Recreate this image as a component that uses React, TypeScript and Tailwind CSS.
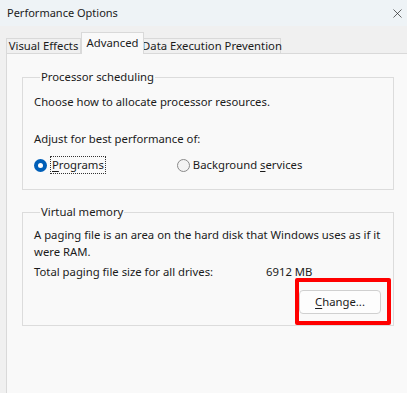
import { X } from 'lucide-react';

const font = { fontFamily: '"Noto Sans", "Liberation Sans", sans-serif' };

function Radio({ checked }: { checked?: boolean }) {
  return checked ? (
    <span className="flex h-[13px] w-[13px] shrink-0 items-center justify-center rounded-full bg-[#005fb8]">
      <span className="h-[5px] w-[5px] rounded-full bg-white" />
    </span>
  ) : (
    <span className="block h-[13px] w-[13px] shrink-0 rounded-full border border-[#8a8a8a] bg-[#f4f4f4]" />
  );
}

export default function App() {
  return (
    <div
      className="flex h-[393px] w-[407px] flex-col overflow-hidden whitespace-nowrap bg-[#f0f0f0] text-[11.3px] leading-[16px] text-[#1b1b1b]"
      style={font}
    >
      {/* Title bar */}
      <div className="flex h-[26px] shrink-0 items-center justify-between bg-[#eef3f6] pl-[7px] pr-[2px]">
        <span className="text-[11px]">Performance Options</span>
        <X size={15} strokeWidth={1.1} className="text-[#222]" />
      </div>

      {/* Tabs */}
      <div className="flex h-[27px] shrink-0 items-end pl-[6px]">
        <div className="flex h-[15px] w-[75px] items-center justify-center border border-b-0 border-[#d9d9d9] bg-[#f0f0f0]">
          Visual Effects
        </div>
        <div className="relative z-10 -mb-px flex h-[22px] w-[63px] items-center justify-center border border-b-0 border-[#d9d9d9] bg-[#f9f9f9] pb-[2px]">
          Advanced
        </div>
        <div className="flex h-[15px] w-[137px] items-center justify-center border border-b-0 border-l-0 border-[#d9d9d9] bg-[#f0f0f0]">
          Data Execution Prevention
        </div>
      </div>

      {/* Panel */}
      <div className="ml-[6px] flex-1 border-l border-t border-[#d9d9d9] bg-[#f9f9f9] pl-[15px] pt-[15px]">
        <fieldset className="w-[372px] border border-[#dcdcdc] pb-[15px] pl-[11px]">
          <legend className="ml-[6px] px-[1px]">Processor scheduling</legend>
          <p className="pt-[9px]">Choose how to allocate processor resources.</p>
          <p className="pt-[21px]">Adjust for best performance of:</p>
          <div className="flex items-center pt-[9px]">
            <Radio checked />
            <span className="ml-[3px] border border-dotted border-[#333] px-[1px]">
              <span className="underline underline-offset-2">P</span>rograms
            </span>
            <span className="ml-[71px]">
              <Radio />
            </span>
            <span className="ml-[3px]">
              Background <span className="underline underline-offset-2">s</span>ervices
            </span>
          </div>
        </fieldset>

        <fieldset className="mt-[14px] w-[372px] border border-[#dcdcdc] pb-[11px] pl-[11px] pr-[12px]">
          <legend className="ml-[6px] px-[1px]">Virtual memory</legend>
          <p className="whitespace-normal pt-[6px] leading-[17px]">
            A paging file is an area on the hard disk that Windows uses as if it were RAM.
          </p>
          <div className="flex pt-[4px]">
            <span className="w-[232px]">Total paging file size for all drives:</span>
            <span>6912 MB</span>
          </div>
          <div className="flex justify-end pt-[10px]">
            <div className="relative">
              <button className="flex h-[24px] w-[82px] items-center justify-center rounded-[4px] border border-[#d0d0d0] bg-[#fdfdfd]">
                <span>
                  <span className="underline underline-offset-2">C</span>hange...
                </span>
              </button>
              <div className="absolute -left-[4px] -right-[10px] -top-[12px] -bottom-[11px] rounded-[2px] border-[4px] border-[#ff0000]" />
            </div>
          </div>
        </fieldset>
      </div>
    </div>
  );
}
